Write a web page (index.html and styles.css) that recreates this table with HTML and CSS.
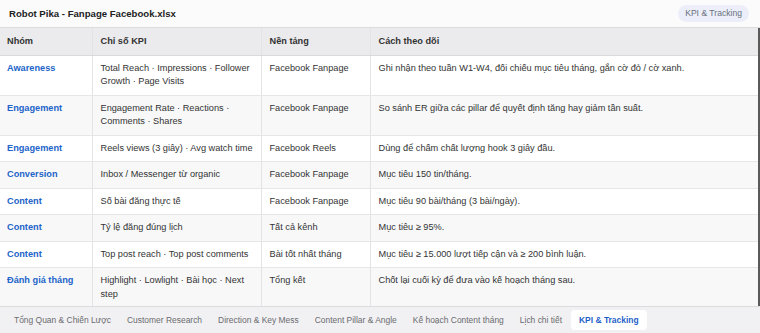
FILE: index.html
```html
<!DOCTYPE html>
<html lang="vi">
<head>
<meta charset="utf-8">
<link rel="stylesheet" href="styles.css">
</head>
<body>
<div class="sheet">
  <header class="topbar">
    <div class="title">Robot Pika - Fanpage Facebook.xlsx</div>
    <div class="pill">KPI &amp; Tracking</div>
  </header>
  <div class="grid-wrap">
    <table class="grid">
      <colgroup>
        <col class="c1"><col class="c2"><col class="c3"><col class="c4">
      </colgroup>
      <thead>
        <tr><th>Nhóm</th><th>Chỉ số KPI</th><th>Nền tảng</th><th>Cách theo dõi</th></tr>
      </thead>
      <tbody>
        <tr><td class="grp">Awareness</td><td>Total Reach · Impressions · Follower Growth · Page Visits</td><td>Facebook Fanpage</td><td>Ghi nhận theo tuần W1-W4, đối chiếu mục tiêu tháng, gắn cờ đỏ / cờ xanh.</td></tr>
        <tr><td class="grp">Engagement</td><td>Engagement Rate · Reactions · Comments · Shares</td><td>Facebook Fanpage</td><td>So sánh ER giữa các pillar để quyết định tăng hay giảm tần suất.</td></tr>
        <tr><td class="grp">Engagement</td><td>Reels views (3 giây) · Avg watch time</td><td>Facebook Reels</td><td>Dùng để chấm chất lượng hook 3 giây đầu.</td></tr>
        <tr><td class="grp">Conversion</td><td>Inbox / Messenger từ organic</td><td>Facebook Fanpage</td><td>Mục tiêu 150 tin/tháng.</td></tr>
        <tr><td class="grp">Content</td><td>Số bài đăng thực tế</td><td>Facebook Fanpage</td><td>Mục tiêu 90 bài/tháng (3 bài/ngày).</td></tr>
        <tr><td class="grp">Content</td><td>Tỷ lệ đăng đúng lịch</td><td>Tất cả kênh</td><td>Mục tiêu ≥ 95%.</td></tr>
        <tr><td class="grp">Content</td><td>Top post reach · Top post comments</td><td>Bài tốt nhất tháng</td><td>Mục tiêu ≥ 15.000 lượt tiếp cận và ≥ 200 bình luận.</td></tr>
        <tr><td class="grp">Đánh giá tháng</td><td>Highlight · Lowlight · Bài học · Next step</td><td>Tổng kết</td><td>Chốt lại cuối kỳ để đưa vào kế hoạch tháng sau.</td></tr>
      </tbody>
    </table>
  </div>
  <nav class="tabs">
    <span class="tab">Tổng Quan &amp; Chiến Lược</span>
    <span class="tab">Customer Research</span>
    <span class="tab">Direction &amp; Key Mess</span>
    <span class="tab">Content Pillar &amp; Angle</span>
    <span class="tab">Kế hoạch Content tháng</span>
    <span class="tab">Lịch chi tiết</span>
    <span class="tab active">KPI &amp; Tracking</span>
  </nav>
</div>
</body>
</html>
```
FILE: styles.css
```css
* { box-sizing: border-box; }
html, body { margin: 0; padding: 0; background: #ffffff; }
body {
  font-family: "Liberation Sans", Arial, sans-serif;
  font-size: 9.2px;
  color: #333;
  width: 760px;
  height: 333px;
  overflow: hidden;
}
.sheet { display: flex; flex-direction: column; height: 333px; }
.topbar {
  height: 28px;
  display: flex;
  align-items: center;
  justify-content: space-between;
  padding: 0 11px 0 9px;
  background: #fbfbfc;
  border-bottom: 1px solid #dcdcdf;
  flex: none;
}
.title { font-weight: bold; font-size: 9.6px; color: #222; }
.pill {
  background: #eceffa;
  color: #6a6f7c;
  border-radius: 9px;
  padding: 3px 7px;
  font-size: 8.6px;
  line-height: 11px;
}
.grid-wrap {
  flex: 1;
  border-right: 2px solid #5a5a5a;
  overflow: hidden;
}
.grid {
  width: 758px;
  border-collapse: collapse;
  table-layout: fixed;
}
.c1 { width: 92px; }
.c2 { width: 169px; }
.c3 { width: 109px; }
.c4 { width: auto; }
.grid th, .grid td {
  text-align: left;
  vertical-align: top;
  padding: 6px 8px 6px 8px;
  line-height: 13.5px;
  border-left: 1px solid #e3e3e6;
  border-bottom: 1px solid #e6e6e8;
}
.grid th:first-child, .grid td:first-child { border-left: none; padding-left: 7px; }
.grid th {
  background: #ebebed;
  font-weight: bold;
  color: #333;
  padding-top: 7px;
  padding-bottom: 6px;
  border-bottom: 1px solid #dadadd;
}
.grid tbody tr:nth-child(even) td { background: #f8f8f9; }
.grp { color: #2264c9; font-weight: bold; }
.tabs {
  flex: none;
  height: 27px;
  background: #f1f1f3;
  border-top: 1px solid #dcdcdf;
  display: flex;
  align-items: center;
  padding: 0 0 0 6px;
  font-size: 8.45px;
}
.tab {
  color: #6b6b70;
  padding: 4px 8px;
  line-height: 12px;
  border-radius: 4px;
  white-space: nowrap;
}
.tab.active {
  background: #ffffff;
  color: #1f5fc9;
  font-weight: bold;
  margin-left: 1px;
}
```
